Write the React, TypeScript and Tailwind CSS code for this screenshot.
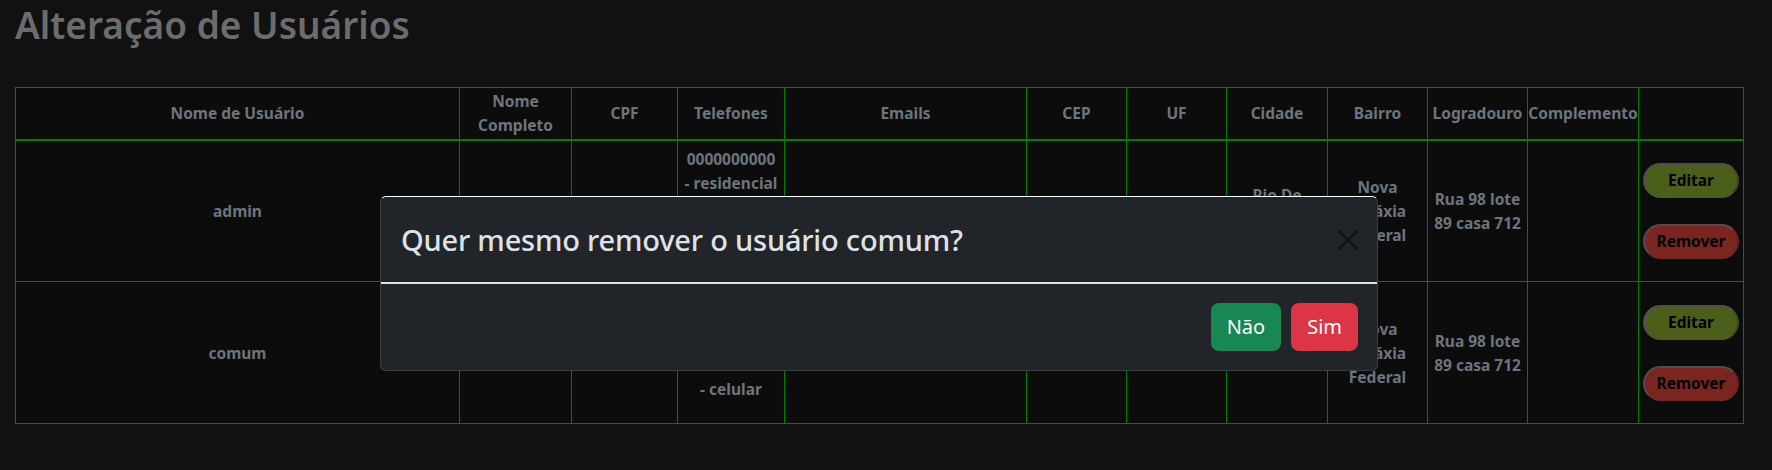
interface Telefone {
  numero: string;
  tipo: string;
}

interface Usuario {
  usuario: string;
  telefones: Telefone[];
  emails: string[];
  cidade: string;
  bairro: string;
  logradouro: string;
}

const usuarios: Usuario[] = [
  {
    usuario: "admin",
    telefones: [
      { numero: "0000000000", tipo: "residencial" },
      { numero: "0000000000", tipo: "celular" },
    ],
    emails: ["admin@admin.com - pessoal"],
    cidade: "Rio De Janeiro",
    bairro: "Nova Galáxia Federal",
    logradouro: "Rua 98 lote 89 casa 712",
  },
  {
    usuario: "comum",
    telefones: [
      { numero: "0000000000", tipo: "residencial" },
      { numero: "0000000000", tipo: "celular" },
    ],
    emails: ["comum@comum.com - pessoal"],
    cidade: "Rio De Janeiro",
    bairro: "Nova Galáxia Federal",
    logradouro: "Rua 98 lote 89 casa 712",
  },
];

const colunas = [
  { nome: "Nome de Usuário", w: "w-[444px]" },
  { nome: "Nome Completo", w: "w-[112px]" },
  { nome: "CPF", w: "w-[106px]" },
  { nome: "Telefones", w: "w-[107px]" },
  { nome: "Emails", w: "w-[242px]" },
  { nome: "CEP", w: "w-[100px]" },
  { nome: "UF", w: "w-[100px]" },
  { nome: "Cidade", w: "w-[101px]" },
  { nome: "Bairro", w: "w-[100px]" },
  { nome: "Logradouro", w: "w-[100px]" },
  { nome: "Complemento", w: "w-[111px]" },
  { nome: "", w: "w-[105px]" },
];

const th = "border border-[#008000] border-b-2 h-[52px] px-0 py-0 text-center align-middle font-bold leading-6 text-[#6c757d]";
const td = "border border-[#008000] h-[142px] px-1 py-1 text-center align-middle font-bold leading-6 text-[#6c757d]";

function ModalRemover({ nome }: { nome: string }) {
  return (
    <div className="absolute left-[380px] top-[196px] w-[998px] rounded-[6px] border border-[#3b4045] border-t-white bg-[#212529]">
      <div className="flex h-[87px] items-center justify-between border-b-2 border-[#dee2e6] pl-[20px] pr-[19px]">
        <h5 className="text-[29px] font-medium leading-9 tracking-[-0.2px] text-[#dee2e6]">Quer mesmo remover o usuário {nome}?</h5>
        <button type="button" className="opacity-50">
          <svg width="20" height="20" viewBox="0 0 16 16" fill="#000">
            <path d="M.293.293a1 1 0 0 1 1.414 0L8 6.586 14.293.293a1 1 0 1 1 1.414 1.414L9.414 8l6.293 6.293a1 1 0 0 1-1.414 1.414L8 9.414l-6.293 6.293a1 1 0 0 1-1.414-1.414L6.586 8 .293 1.707a1 1 0 0 1 0-1.414z" />
          </svg>
        </button>
      </div>
      <div className="flex h-[86px] items-center justify-end gap-[10px] pr-[19px]">
        <button type="button" className="h-[48px] rounded-[8px] bg-[#198754] px-4 text-[20px] text-white">
          Não
        </button>
        <button type="button" className="h-[48px] rounded-[8px] bg-[#dc3545] px-4 text-[20px] text-white">
          Sim
        </button>
      </div>
    </div>
  );
}

export default function App() {
  return (
    <div className="relative min-h-screen bg-[#111111] px-[15px] pt-[2px] font-['Noto_Sans','Open_Sans',sans-serif] text-[15.5px]">
      <h1 className="text-[37px] font-semibold leading-[46px] text-[#6c6c6c]">Alteração de Usuários</h1>

      <table className="mt-[39px] w-[1728px] table-fixed border-collapse bg-[#0c0c0c]">
        <colgroup>
          {colunas.map((c, i) => (
            <col key={i} className={c.w} />
          ))}
        </colgroup>
        <thead>
          <tr>
            {colunas.map((c, i) => (
              <th key={i} className={th}>
                {c.nome}
              </th>
            ))}
          </tr>
        </thead>
        <tbody>
          {usuarios.map((u) => (
            <tr key={u.usuario}>
              <td className={td}>{u.usuario}</td>
              <td className={td}></td>
              <td className={td}></td>
              <td className={td}>
                {u.telefones.map((t) => (
                  <p key={t.tipo} className="mb-4">
                    <span className="block whitespace-nowrap">{t.numero}</span>
                    <span className="block whitespace-nowrap">- {t.tipo}</span>
                  </p>
                ))}
              </td>
              <td className={td}>
                {u.emails.map((e) => (
                  <p key={e} className="mb-4">{e}</p>
                ))}
              </td>
              <td className={td}></td>
              <td className={td}></td>
              <td className={td}>
                <span className="relative -top-[4px]">{u.cidade}</span>
              </td>
              <td className={td}>{u.bairro}</td>
              <td className={td}>{u.logradouro}</td>
              <td className={td}></td>
              <td className={td}>
                <div className="flex flex-col gap-[26px]">
                  <button type="button" className="h-[35px] w-full rounded-full border-2 border-t-[#4f4f4f] border-l-[#4f4f4f] border-r-[#3c4c15] border-b-[#4b5f1a] bg-[#4b5f1a] font-bold text-black">
                    Editar
                  </button>
                  <button type="button" className="h-[35px] w-full rounded-full border-2 border-t-[#4f4f4f] border-l-[#4f4f4f] border-r-[#6a221e] border-b-[#7a2520] bg-[#7a2520] font-bold text-black">
                    Remover
                  </button>
                </div>
              </td>
            </tr>
          ))}
        </tbody>
      </table>

      <ModalRemover nome="comum" />
    </div>
  );
}
